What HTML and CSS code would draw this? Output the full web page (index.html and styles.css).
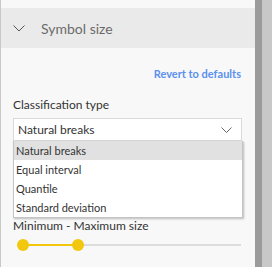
FILE: index.html
```html
<!DOCTYPE html>
<html lang="en">
<head>
    <meta charset="UTF-8">
    <meta name="viewport" content="width=device-width, initial-scale=1.0">
    <title>Symbol size</title>
    <link rel="stylesheet" href="styles.css">
</head>
<body>
    <div class="pane">
        <div class="section-head">
            <svg class="chevron" width="12" height="7" viewBox="0 0 12 7">
                <polyline points="0.5,0.5 6,6 11.5,0.5" fill="none" stroke="#555" stroke-width="1"/>
            </svg>
            <span class="section-title">Symbol size</span>
        </div>
        <div class="section-body">
            <div class="revert">Revert to defaults</div>
            <div class="label">Classification type</div>
            <div class="dropdown">
                <div class="dropdown-box">
                    <span>Natural breaks</span>
                    <svg class="caret" width="11" height="7" viewBox="0 0 11 7">
                        <polyline points="0.5,0.5 5.5,5.5 10.5,0.5" fill="none" stroke="#666" stroke-width="1"/>
                    </svg>
                </div>
                <div class="dropdown-list">
                    <div class="option selected">Natural breaks</div>
                    <div class="option">Equal interval</div>
                    <div class="option">Quantile</div>
                    <div class="option">Standard deviation</div>
                </div>
            </div>
            <div class="label range-label">Minimum - Maximum size</div>
            <div class="slider">
                <div class="track"></div>
                <div class="fill" style="left: 10px; width: 55px;"></div>
                <div class="thumb" style="left: 10px;"></div>
                <div class="thumb" style="left: 65px;"></div>
            </div>
        </div>
    </div>
    <div class="strip-dark"></div>
    <div class="strip-light"></div>
</body>
</html>
```

FILE: styles.css
```css
body, html {
    margin: 0;
    padding: 0;
    width: 100%;
    height: 100%;
    overflow: hidden;
}
body {
    display: flex;
    font-family: Lato, "Liberation Sans", sans-serif;
    background: #f8f8f8;
}
.pane {
    flex: 1;
    border-left: 1px solid #c8c8c8;
    background: #f8f8f8;
    padding-top: 8px;
}
.strip-dark {
    width: 7px;
    background: #9b9b9b;
}
.strip-light {
    width: 10px;
    background: #c8c8c8;
}
.section-head {
    height: 40px;
    background: #eaeaea;
    display: flex;
    align-items: center;
}
.chevron {
    margin-left: 12px;
}
.section-title {
    margin-left: 16px;
    font-size: 14px;
    color: #6a6a6a;
}
.section-body {
    padding: 18px 13px 0 12px;
}
.revert {
    text-align: right;
    font-size: 11px;
    font-weight: bold;
    color: #5b91ee;
    padding-right: 1px;
    line-height: 16px;
}
.label {
    font-size: 12px;
    color: #333;
    line-height: 16px;
}
.revert + .label {
    margin-top: 15px;
}
.dropdown {
    position: relative;
    margin-top: 5px;
}
.dropdown-box {
    height: 21px;
    border: 1px solid #dadada;
    background: #fff;
    display: flex;
    align-items: center;
    justify-content: space-between;
    padding: 0 9px 0 4px;
    font-size: 12px;
    color: #333;
}
.caret {
    margin-top: 1px;
}
.dropdown-list {
    position: absolute;
    top: 100%;
    left: 0;
    right: -1px;
    background: #fff;
    border: 1px solid #c4c4c4;
    border-top: none;
    box-shadow: 1px 1px 2px rgba(0, 0, 0, 0.25);
    z-index: 2;
}
.option {
    height: 19px;
    line-height: 19px;
    padding-left: 2px;
    font-size: 11px;
    color: #333;
}
.option.selected {
    background: #e1e1e1;
}
.range-label {
    margin-top: 77px;
}
.slider {
    position: relative;
    height: 16px;
    margin-top: 3px;
}
.track {
    position: absolute;
    left: 10px;
    right: 1px;
    top: 7px;
    height: 2px;
    background: #dcdcdc;
}
.fill {
    position: absolute;
    top: 7px;
    height: 2px;
    background: #f2c80f;
}
.thumb {
    position: absolute;
    top: 2px;
    width: 12px;
    height: 12px;
    margin-left: -6px;
    border-radius: 50%;
    background: #f2c80f;
}
```
